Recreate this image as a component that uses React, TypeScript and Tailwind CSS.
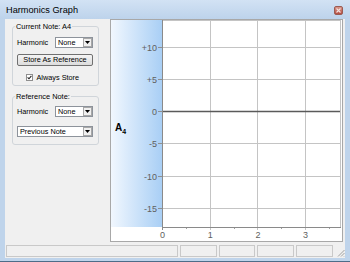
import React from "react";

const Y0 = 91.5;
const YSTEP = 32.25;
const X0 = 51.5;
const XSTEP = 47.7;

const yTicks = [
  { label: "+10", v: 2 },
  { label: "+5", v: 1 },
  { label: "0", v: 0 },
  { label: "-5", v: -1 },
  { label: "-10", v: -2 },
  { label: "-15", v: -3 },
];

const px = (n: number) => Math.round(n - 0.5) + 0.5;

function Combo({ value, className }: { value: string; className: string }) {
  return (
    <div className={`flex items-center h-[11px] bg-white border border-[#8d939b] ${className}`}>
      <span className="flex-1 pl-[2px] text-[7.3px] leading-none">{value}</span>
      <span className="w-[9px] h-[9px] flex items-center justify-center bg-[#f0f0f0] border border-[#a8a8a8]">
        <svg width="5" height="3" viewBox="0 0 5 3">
          <path d="M0 0h5L2.5 3z" fill="#000" />
        </svg>
      </span>
    </div>
  );
}

function Group({ title, children, className }: { title: string; children: React.ReactNode; className: string }) {
  return (
    <fieldset className={`w-[87px] border border-[#d0d5da] rounded-[3px] ${className}`}>
      <legend className="ml-[2px] px-[1px] text-[7.4px] leading-[9px]">{title}</legend>
      {children}
    </fieldset>
  );
}

function Graph() {
  return (
    <div className="w-[233px] h-[223px] border border-[#a8a8a8] bg-white">
      <svg width="231" height="221" viewBox="0 0 231 221" fontFamily="Liberation Sans, Arial, sans-serif">
        <defs>
          <linearGradient id="side" x1="0" x2="1" y1="0" y2="0">
            <stop offset="0" stopColor="#f1f7fe" />
            <stop offset="1" stopColor="#a9cff5" />
          </linearGradient>
        </defs>
        <rect x="0" y="0" width="51" height="207" fill="url(#side)" />
        <line x1="51" x2="230" y1="0.5" y2="0.5" stroke="#c4c4c4" />
        <line x1="229.5" x2="229.5" y1="0" y2="207" stroke="#c4c4c4" />
        {[1, 2, 3].map((i) => (
          <line key={i} x1={px(X0 + XSTEP * i)} x2={px(X0 + XSTEP * i)} y1="0" y2="210" stroke="#c4c4c4" />
        ))}
        {[0, 1, 2, 3].map((i) => (
          <line key={i} x1={px(X0 + XSTEP * i + XSTEP / 2)} x2={px(X0 + XSTEP * i + XSTEP / 2)} y1="207" y2="209" stroke="#a0a0a0" />
        ))}
        {yTicks.map((t) => {
          const y = px(Y0 - YSTEP * t.v);
          return (
            <g key={t.label}>
              <line x1="47" x2="51" y1={y} y2={y} stroke="#909090" />
              <line
                x1="51"
                x2="229"
                y1={t.v === 0 ? Y0 : y}
                y2={t.v === 0 ? Y0 : y}
                stroke={t.v === 0 ? "#5a5a5a" : "#c4c4c4"}
                strokeWidth={t.v === 0 ? 1.6 : 1}
              />
              <text x="46" y={y} dy="0.35em" textAnchor="end" fontSize="9" fill="#606060">
                {t.label}
              </text>
            </g>
          );
        })}
        <line x1={X0} x2={X0} y1="0" y2="210" stroke="#8a8a8a" />
        <line x1="51" x2="230" y1="207.5" y2="207.5" stroke="#8a8a8a" />
        {[0, 1, 2, 3].map((i) => (
          <text key={i} x={X0 + XSTEP * i} y="215" dy="0.35em" textAnchor="middle" fontSize="9" fill="#606060">
            {i}
          </text>
        ))}
        <text x="4" y="111" fontSize="10" fontWeight="bold" fill="#000">
          A
          <tspan fontSize="7" dy="2.5">
            4
          </tspan>
        </text>
      </svg>
    </div>
  );
}

export default function App() {
  return (
    <div className="w-[350px] h-[262px] flex flex-col bg-[#bfd4eb] border-b border-[#4d6c88] font-['Liberation_Sans',Arial,sans-serif] text-black">
      <div className="h-[19px] flex items-center justify-between pl-[6px] pr-[7px] pt-[2px] bg-gradient-to-b from-[#d2e2f4] to-[#bdd3eb]">
        <span className="text-[9.2px] leading-none">Harmonics Graph</span>
        <span className="w-[9px] h-[9px] flex items-center justify-center rounded-[2px] border border-[#9a5b52] bg-gradient-to-b from-[#d9968a] to-[#b44c41]">
          <svg width="5" height="5" viewBox="0 0 5 5">
            <path d="M0.5 0.5L4.5 4.5M4.5 0.5L0.5 4.5" stroke="#f4e4e0" strokeWidth="1.1" />
          </svg>
        </span>
      </div>

      <div className="mx-[5px] h-[239px] bg-[#f0f0f0] flex flex-col">
        <div className="flex h-[223px]">
          <div className="w-[105px] pl-[7px]">
            <Group title="Current Note: A4" className="mt-[3px]">
              <div className="pl-[4px] pr-[5px] pt-[6px] pb-[4px]">
                <div className="flex items-center justify-between">
                  <span className="text-[7.3px] leading-none">Harmonic</span>
                  <Combo value="None" className="w-[38px]" />
                </div>
                <button className="mt-[6px] w-full h-[12px] flex items-center justify-center rounded-[2px] border border-[#707070] bg-gradient-to-b from-[#f4f4f4] to-[#dcdcdc] text-[7.3px] leading-none">
                  Store As Reference
                </button>
                <div className="mt-[8px] ml-[8.5px] flex items-center gap-[4px]">
                  <span className="w-[7px] h-[7px] flex items-center justify-center bg-white border border-[#8f8f8f]">
                    <svg width="5" height="5" viewBox="0 0 5 5">
                      <path d="M0.6 2.4L2 3.8L4.4 0.9" fill="none" stroke="#222" strokeWidth="1.1" />
                    </svg>
                  </span>
                  <span className="text-[7.3px] leading-none">Always Store</span>
                </div>
              </div>
            </Group>

            <Group title="Reference Note:" className="mt-[6px]">
              <div className="pl-[4px] pr-[5px] pt-[5px] pb-[7px]">
                <div className="flex items-center justify-between">
                  <span className="text-[7.3px] leading-none">Harmonic</span>
                  <Combo value="None" className="w-[38px]" />
                </div>
                <Combo value="Previous Note" className="mt-[9px] w-full" />
              </div>
            </Group>
          </div>
          <Graph />
        </div>

        <div className="mt-[2px] h-[14px] flex gap-[2px] pl-[1px] py-[1px]">
          <div className="w-[172px] border border-[#c9c9c9]" />
          <div className="w-[37px] border border-[#c9c9c9]" />
          <div className="w-[36px] border border-[#c9c9c9]" />
          <div className="w-[37px] border border-[#c9c9c9]" />
          <div className="w-[37px] border border-[#c9c9c9]" />
          <div className="flex-1 flex items-end justify-end">
            <svg width="9" height="9" viewBox="0 0 9 9">
              <path d="M8.5 2L2 8.5M8.5 5L5 8.5M8.5 8L8 8.5" stroke="#a0a0a0" strokeWidth="1" />
            </svg>
          </div>
        </div>
      </div>
    </div>
  );
}
